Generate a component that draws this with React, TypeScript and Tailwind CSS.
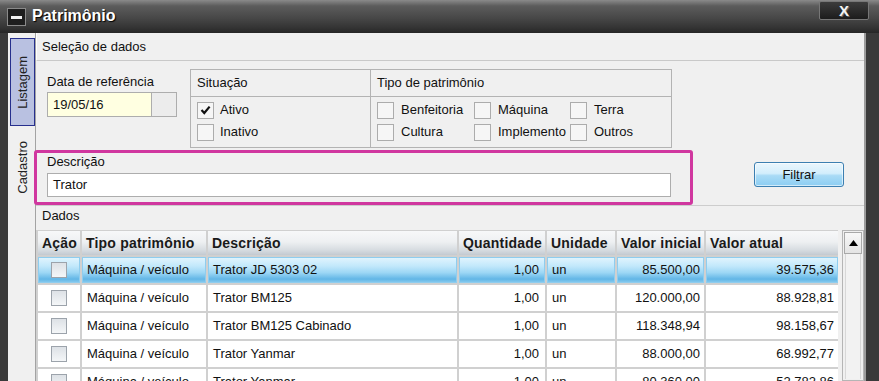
import React from "react";

const Check = ({ checked = false }: { checked?: boolean }) => (
  <div className="w-[17px] h-[17px] border border-[#acacac] bg-[#f6f6f6] flex items-center justify-center shrink-0">
    {checked && (
      <svg width="11" height="10" viewBox="0 0 11 10">
        <path d="M1.5 5 L4.3 8 L9.6 1.6" stroke="#111" strokeWidth="2.2" fill="none" />
      </svg>
    )}
  </div>
);

const TableBox = () => (
  <div className="w-[16px] h-[16px] border border-[#9ca3ab] bg-[linear-gradient(to_bottom,#dde1e6,#f4f6f8)]" />
);

const rows: string[][] = [
  ["Trator JD 5303 02", "85.500,00", "39.575,36"],
  ["Trator BM125", "120.000,00", "88.928,81"],
  ["Trator BM125 Cabinado", "118.348,94", "98.158,67"],
  ["Trator Yanmar", "88.000,00", "68.992,77"],
  ["Trator Yanmar", "80.360,00", "52.782,86"],
];

const headers = ["Ação", "Tipo patrimônio", "Descrição", "Quantidade", "Unidade", "Valor inicial", "Valor atual"];

export default function App() {
  return (
    <div className="w-[879px] h-[381px] overflow-hidden bg-[#3a3a3a] flex flex-col font-['Liberation_Sans',Arial,sans-serif] text-[13px] text-[#111]">
      {/* Title bar */}
      <div className="h-[33px] shrink-0 flex items-start bg-[linear-gradient(to_bottom,#8a8a8a_0%,#5c5c5c_18%,#474747_55%,#333_85%,#262626_100%)]">
        <div className="ml-[7px] mt-[8px] w-[19px] h-[18px] border border-[#8a8a8a] bg-[#1e1e1e] flex items-center justify-center">
          <div className="w-[11px] h-[3px] bg-[#f2f2f2]" />
        </div>
        <div className="ml-[6px] mt-[6px] text-[16px] font-bold text-white leading-[20px] [text-shadow:1px_1px_1px_#000]">
          Patrimônio
        </div>
        <div className="ml-auto mr-[10px] mt-[1px] w-[50px] h-[19px] border border-[#777] rounded-[2px] bg-[linear-gradient(to_bottom,#3c3c3c,#1c1c1c)] flex items-center justify-center text-[#f4f4f4] font-bold text-[15px] leading-none [text-shadow:1px_1px_0_#666]">
          X
        </div>
      </div>

      {/* Body */}
      <div className="flex-1 flex pl-[8px] min-h-0">
        {/* Tabs */}
        <div className="w-[28px] shrink-0 bg-[#f0f0f0] border-r border-[#a3a3a3] flex flex-col">
          <div className="mt-[5px] ml-[2px] w-[25px] h-[88px] bg-[#b9c1e1] border border-[#262f8d] flex items-center justify-center">
            <span className="[writing-mode:vertical-rl] rotate-180 text-[#222]">Listagem</span>
          </div>
          <div className="ml-[2px] w-[25px] h-[82px] flex items-center justify-center">
            <span className="[writing-mode:vertical-rl] rotate-180 text-[#222]">Cadastro</span>
          </div>
        </div>

        {/* Main */}
        <div className="w-[830px] shrink-0 bg-[#f0f0f0] flex flex-col border-r-2 border-[#9c9c9c]">
          <div className="h-[28px] shrink-0 border-b border-[#c9c9c9] pl-[5px] pt-[1px] flex items-center border-l border-l-white">
            Seleção de dados
          </div>

          {/* Filters */}
          <div className="h-[145px] shrink-0 border-b border-[#cdcdcd] flex flex-col">
            <div className="flex pt-[8px]">
              <div className="w-[154px] pl-[11px] pt-[5px] shrink-0">
                <div className="leading-[16px]">Data de referência</div>
                <div className="mt-[2px] flex h-[25px]">
                  <div className="w-[105px] border border-[#adadad] bg-[#ffffe1] pl-[5px] flex items-center">19/05/16</div>
                  <div className="w-[25px] border border-l-0 border-[#adadad] bg-[#ececec]" />
                </div>
              </div>

              <div className="w-[181px] h-[79px] border border-[#b3b3b3] shrink-0">
                <div className="h-[27px] border-b border-[#b3b3b3] pl-[6px] flex items-center">Situação</div>
                <div className="pl-[6px] pt-[2px]">
                  <div className="h-[22px] flex items-center gap-[6px]">
                    <Check checked />
                    <span>Ativo</span>
                  </div>
                  <div className="h-[22px] flex items-center gap-[6px]">
                    <Check />
                    <span>Inativo</span>
                  </div>
                </div>
              </div>

              <div className="-ml-px w-[302px] h-[79px] border border-[#b3b3b3] shrink-0">
                <div className="h-[27px] border-b border-[#b3b3b3] pl-[6px] flex items-center">Tipo de patrimônio</div>
                <div className="pl-[6px] pt-[2px] grid grid-cols-[97px_96px_1fr]">
                  {["Benfeitoria", "Máquina", "Terra", "Cultura", "Implemento", "Outros"].map((t) => (
                    <div key={t} className="h-[22px] flex items-center gap-[7px]">
                      <Check />
                      <span>{t}</span>
                    </div>
                  ))}
                </div>
              </div>
            </div>

            <div className="flex mt-[2px]">
              <div className="-ml-[2px] w-[659px] h-[55px] border-[3px] border-[#d0379f] rounded-[3px] pl-[10px] pt-[1px] shrink-0">
                <div className="leading-[16px]">Descrição</div>
                <div className="mt-[3px] w-[624px] h-[24px] border border-[#adadad] bg-white pl-[5px] flex items-center">Trator</div>
              </div>
              <div className="ml-[61px] mt-[12px] w-[90px] h-[25px] rounded-[3px] border border-[#3c7fb1] bg-[linear-gradient(to_bottom,#eaf6fd_0%,#d3eefc_45%,#a9dbf6_55%,#8ccdf2_100%)] shadow-[inset_0_0_0_1px_rgba(255,255,255,0.6)] flex items-center justify-center">
                <span>
                  Fil<span className="underline">t</span>rar
                </span>
              </div>
            </div>
          </div>

          <div className="h-[24px] shrink-0 pl-[6px] pt-[2px] leading-[16px]">Dados</div>

          {/* Table */}
          <div className="flex-1 flex min-h-0 overflow-hidden">
            <div className="w-[802px] shrink-0 bg-[#d0d0d0] pl-[2px] pt-[1px] self-start">
              <div className="grid grid-cols-[42px_124px_249px_86px_68px_87px_132px] gap-[2px]">
                {headers.map((h) => (
                  <div
                    key={h}
                    className="h-[24px] pl-[4px] flex items-center font-bold text-[14px] tracking-[0.2px] text-[#1a1a1a] bg-[linear-gradient(to_bottom,#f7f8f9_0%,#eef0f2_45%,#d6dbe0_80%,#c3cad1_100%)]"
                  >
                    {h}
                  </div>
                ))}
                {rows.map((r, i) => {
                  const sel = i === 0;
                  const cell = sel
                    ? "h-[26px] flex items-center bg-[linear-gradient(to_bottom,#e3f5fe_0%,#c2e8fb_35%,#9dd7f5_60%,#62b6e6_85%,#8ccdf0_100%)] shadow-[inset_0_0_0_1px_#8fcdee]"
                    : "h-[26px] flex items-center bg-white";
                  return (
                    <React.Fragment key={i}>
                      <div className={cell + " justify-center"}>
                        <TableBox />
                      </div>
                      <div className={cell + " pl-[5px]"}>Máquina / veículo</div>
                      <div className={cell + " pl-[5px]"}>{r[0]}</div>
                      <div className={cell + " justify-end pr-[6px]"}>1,00</div>
                      <div className={cell + " pl-[5px]"}>un</div>
                      <div className={cell + " justify-end pr-[4px]"}>{r[1]}</div>
                      <div className={cell + " justify-end pr-[4px]"}>{r[2]}</div>
                    </React.Fragment>
                  );
                })}
              </div>
            </div>
            <div className="ml-[4px] w-[22px] shrink-0 h-full border border-[#b5b5b5] bg-[#f0f0f0] flex flex-col p-px">
              <div className="h-[22px] border border-[#a9a9a9] bg-[linear-gradient(to_bottom,#f8f8f8,#e4e4e4)] flex items-center justify-center">
                <svg width="9" height="6" viewBox="0 0 9 6">
                  <path d="M4.5 0 L9 6 L0 6 Z" fill="#000" />
                </svg>
              </div>
              <div className="flex-1 mx-[1px] border-x border-[#d8d8d8] bg-[#f2f2f2]" />
            </div>
          </div>
        </div>
      </div>
    </div>
  );
}
